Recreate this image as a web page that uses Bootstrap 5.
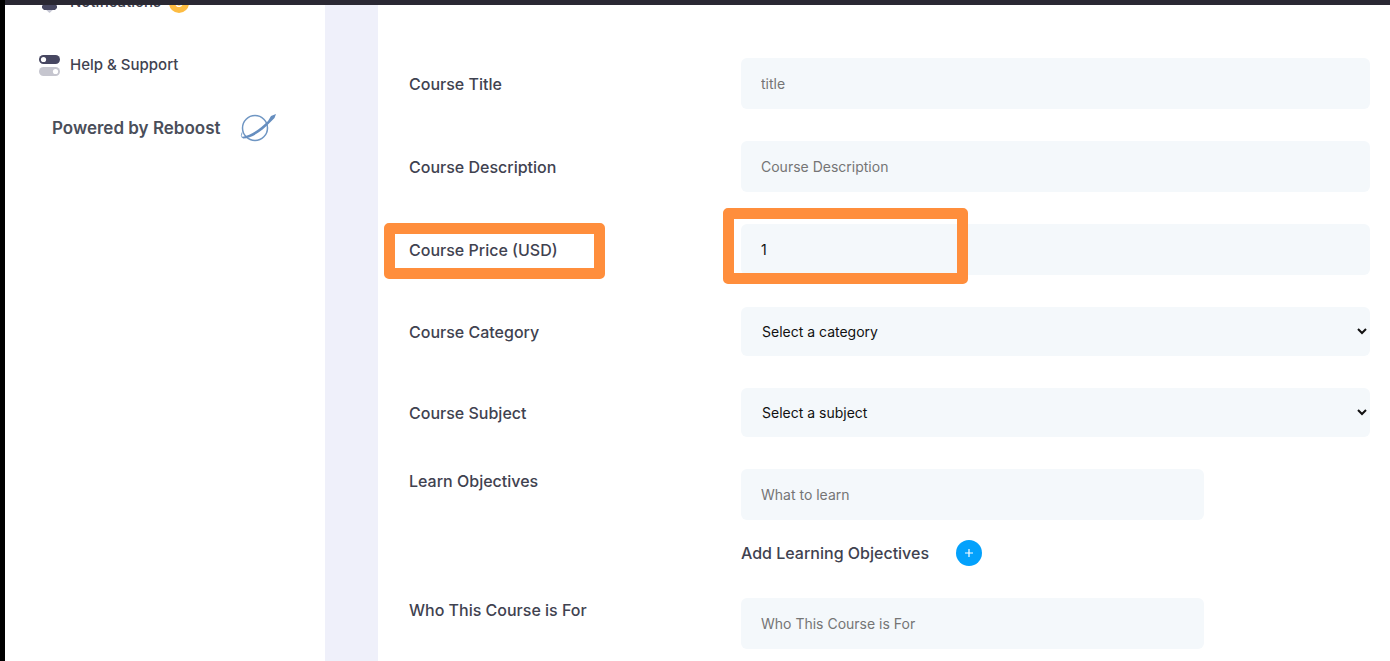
<!DOCTYPE html>
<html lang="en">
<head>
<meta charset="utf-8">
<meta name="viewport" content="width=device-width, initial-scale=1">
<title>Create Course</title>
<link rel="stylesheet" href="https://cdn.jsdelivr.net/npm/bootstrap@5.3.0/dist/css/bootstrap.min.css">
<style>
  body { font-family: Inter, "Open Sans", sans-serif; color: #3f4250; background: #fff; }
  .app-shell { border-left: 5px solid #000; }
  .top-strip { height: 5px; background: #2a2833; }
  .side-panel { width: 320px; }
  .side-menu { margin-top: -34px; }
  .side-item { height: 63px; padding-left: 33px; gap: 9px; font-size: 15px; font-weight: 500; color: #3f4250; }
  .side-icon { width: 23px; height: 23px; }
  .count-badge { width: 20px; height: 20px; margin-left: -1px; background: #fdbc42; font-size: 12px; color: #fff; }
  .powered { height: 63px; padding-left: 47px; gap: 18px; font-size: 17px; font-weight: 600; color: #4a4e5a; }
  .page-gutter { width: 53px; background: #eff0fa; }
  .course-form { padding: 53px 20px 12px 31px; gap: 32px; }
  .field-label { width: 332px; font-size: 16px; font-weight: 500; line-height: 24px; }
  .field-box { height: 51px; padding: 0 20px; border: 0; border-radius: 6px; background: #f4f8fb; color: #111; font-size: 14px; }
  select.field-box { height: 49px; padding: 0 2px 0 17px; }
  .field-box::placeholder { color: #757575; opacity: 1; }
  .field-short { max-width: 463px; }
  .add-row { gap: 27px; font-size: 16px; font-weight: 500; line-height: 24px; margin-top: 20px; }
  .add-btn { width: 26px; height: 26px; background: #03a1fc; }
  .callout-frame { border: 11px solid #ff8e3c; border-radius: 5px; pointer-events: none; }
  .callout-label { inset: -15px auto auto -25px; width: 221px; height: 56px; }
  .callout-value { inset: -16px auto auto -18px; width: 245px; height: 76px; }
</style>
</head>
<body>
<div class="app-shell min-vh-100 d-flex flex-column">
  <div class="top-strip"></div>
  <div class="d-flex flex-grow-1 overflow-hidden">
    <aside class="side-panel flex-shrink-0">
      <nav class="side-menu d-flex flex-column">
        <a href="#" class="side-item d-flex align-items-center text-decoration-none">
          <svg class="side-icon" viewBox="0 0 23 23" aria-hidden="true"><path d="M6 17h11l-5.500 5z" fill="#c5c6d3"/><path d="M11.500 2a6 6 0 0 0-6 6v5l-1.500 2v2l2 2h11l2-2v-2l-1.500-2V8a6 6 0 0 0-6-6z" fill="#474761"/></svg>
          <span>Notifications</span>
          <span class="count-badge rounded-circle d-flex align-items-center justify-content-center">3</span>
        </a>
        <a href="#" class="side-item d-flex align-items-center text-decoration-none">
          <svg class="side-icon" viewBox="0 0 23 23" aria-hidden="true"><rect x="1" y="1" width="21" height="9" rx="4.500" fill="#474761"/><circle cx="5.500" cy="5.500" r="2.600" fill="#fff"/><rect x="1" y="13" width="21" height="9" rx="4.500" fill="#c6c6cf"/><circle cx="17.500" cy="17.500" r="2.600" fill="#fff"/></svg>
          <span>Help &amp; Support</span>
        </a>
        <div class="powered d-flex align-items-center">
          <span>Powered by Reboost</span>
          <svg width="40" height="30" viewBox="0 0 40 30" aria-hidden="true"><circle cx="17" cy="14" r="12.500" fill="none" stroke="#6f96c3" stroke-width="1.500"/><path d="M4 18.500Q2.500 22 4.500 24" fill="none" stroke="#7aa0ca" stroke-width="1"/><path d="M4 23C14 21 23 14 30 7L33 2L38 0L36.500 4L32 8.500C25 16 15 24 5 24.500Z" fill="#668ebf"/></svg>
        </div>
      </nav>
    </aside>
    <div class="page-gutter flex-shrink-0"></div>
    <main class="flex-grow-1">
      <form class="course-form d-flex flex-column">
        <div class="d-flex align-items-center">
          <label class="field-label flex-shrink-0" for="title">Course Title</label>
          <input class="field-box w-100" id="title" type="text" placeholder="title">
        </div>
        <div class="d-flex align-items-center">
          <label class="field-label flex-shrink-0" for="description">Course Description</label>
          <input class="field-box w-100" id="description" type="text" placeholder="Course Description">
        </div>
        <div class="d-flex align-items-center">
          <div class="field-label flex-shrink-0 position-relative">
            <label for="price">Course Price (USD)</label>
            <span class="callout-frame callout-label position-absolute"></span>
          </div>
          <div class="w-100 d-flex position-relative">
            <input class="field-box w-100" id="price" type="text" inputmode="numeric" value="1">
            <span class="callout-frame callout-value position-absolute"></span>
          </div>
        </div>
        <div class="d-flex align-items-center">
          <label class="field-label flex-shrink-0" for="category">Course Category</label>
          <select class="field-box w-100" id="category"><option>Select a category</option></select>
        </div>
        <div class="d-flex align-items-center">
          <label class="field-label flex-shrink-0" for="subject">Course Subject</label>
          <select class="field-box w-100" id="subject"><option>Select a subject</option></select>
        </div>
        <div class="d-flex align-items-start">
          <label class="field-label flex-shrink-0" for="objective">Learn Objectives</label>
          <div class="w-100 d-flex flex-column">
            <input class="field-box field-short w-100" id="objective" type="text" placeholder="What to learn">
            <div class="add-row d-flex align-items-center">
              <span id="add-text">Add Learning Objectives</span>
              <button type="button" class="add-btn btn rounded-circle p-0 d-flex align-items-center justify-content-center" aria-labelledby="add-text">
                <svg width="10" height="10" viewBox="0 0 10 10" aria-hidden="true"><path d="M5 1v8M1 5h8" stroke="#fff" stroke-width="1.200"/></svg>
              </button>
            </div>
          </div>
        </div>
        <div class="d-flex align-items-start">
          <label class="field-label flex-shrink-0" for="audience">Who This Course is For</label>
          <div class="w-100 d-flex">
            <input class="field-box field-short w-100" id="audience" type="text" placeholder="Who This Course is For">
          </div>
        </div>
      </form>
    </main>
  </div>
</div>
<script src="https://cdn.jsdelivr.net/npm/bootstrap@5.3.0/dist/js/bootstrap.bundle.min.js"></script>
</body>
</html>
